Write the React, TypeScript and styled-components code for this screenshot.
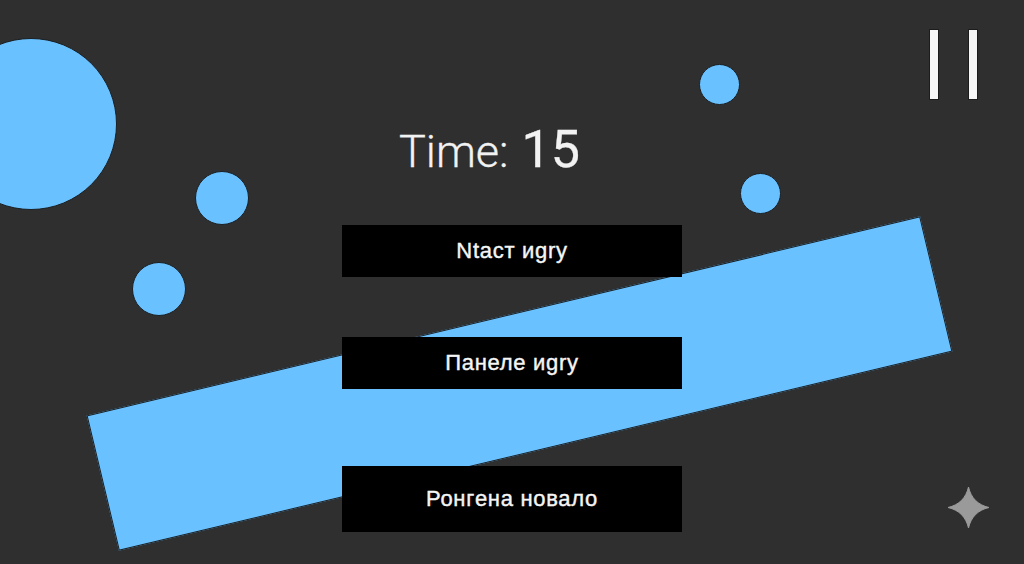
import styled, { createGlobalStyle } from 'styled-components';

const GlobalStyle = createGlobalStyle`
  html,
  body {
    margin: 0;
    padding: 0;
    background-color: #2f2f2f;
  }
`;

const Stage = styled.div`
  position: relative;
  box-sizing: border-box;
  width: 1024px;
  height: 564px;
  padding-top: 30px;
  background-color: #2f2f2f;
  font-family: Roboto, 'Liberation Sans', sans-serif;
  overflow: hidden;
`;

const Ball = styled.div<{ $x: number; $y: number; $size: number }>`
  position: absolute;
  left: ${(props) => props.$x}px;
  top: ${(props) => props.$y}px;
  width: ${(props) => props.$size}px;
  height: ${(props) => props.$size}px;
  box-sizing: border-box;
  background-color: #69c1ff;
  border: 1.5px solid #1a1f23;
  border-radius: 50%;
`;

const Platform = styled.div`
  position: absolute;
  left: 91px;
  top: 314px;
  width: 857px;
  height: 139px;
  box-sizing: border-box;
  background-color: #69c1ff;
  border: 1px solid #1a1f23;
  transform: rotate(-13.44deg);
`;

const TopBar = styled.div`
  position: relative;
  display: flex;
  justify-content: flex-end;
  gap: 31px;
  height: 70px;
  padding-right: 47px;
`;

const PauseBar = styled.div`
  width: 8px;
  height: 69px;
  background-color: #f7f7f7;
  box-shadow: 0 0 0 1px #1c1c1c;
`;

const Timer = styled.div`
  position: relative;
  display: flex;
  justify-content: center;
  align-items: baseline;
  gap: 13px;
  height: 125px;
  padding: 20px 45px 0 0;
  box-sizing: border-box;
  color: #f2f2f2;
  font-size: 45px;
  line-height: 60px;
  font-weight: 300;
  -webkit-text-stroke: 0.3px #f2f2f2;
`;

const TimerValue = styled.span`
  font-size: 52px;
  font-weight: 400;
`;

const Menu = styled.div`
  position: relative;
  display: flex;
  flex-direction: column;
  align-items: center;
`;

const MenuButton = styled.div<{ $height: number; $gap: number }>`
  display: flex;
  justify-content: center;
  align-items: center;
  width: 340px;
  height: ${(props) => props.$height}px;
  margin-top: ${(props) => props.$gap}px;
  background-color: #000000;
  color: #f5f5f5;
  font-family: 'Liberation Sans', Arial, sans-serif;
  font-size: 22px;
  letter-spacing: 0.7px;
  -webkit-text-stroke: 0.4px #f5f5f5;
`;

const StarIcon = styled.svg`
  position: absolute;
  right: 35px;
  bottom: 36px;
  width: 41px;
  height: 41px;
`;

export default function App(): JSX.Element {
  return (
    <>
      <GlobalStyle />
      <Stage>
        <Ball $x={-55} $y={38} $size={172} />
        <Ball $x={195} $y={171} $size={54} />
        <Ball $x={132} $y={262} $size={54} />
        <Ball $x={699} $y={64} $size={41} />
        <Ball $x={740} $y={173} $size={41} />
        <Platform />
        <TopBar>
          <PauseBar />
          <PauseBar />
        </TopBar>
        <Timer>
          Time:<TimerValue>15</TimerValue>
        </Timer>
        <Menu>
          <MenuButton $height={52} $gap={0}>Ntacт иgry</MenuButton>
          <MenuButton $height={52} $gap={60}>Панеле иgry</MenuButton>
          <MenuButton $height={66} $gap={77}>Ронгeна новало</MenuButton>
        </Menu>
        <StarIcon viewBox="0 0 41 41">
          <path d="M20.5 0 C23 11 30 18 41 20.5 C30 23 23 30 20.5 41 C18 30 11 23 0 20.5 C11 18 18 11 20.5 0 Z" fill="#9a9a9a" stroke="#9a9a9a" strokeWidth="1" strokeLinejoin="miter" />
        </StarIcon>
      </Stage>
    </>
  );
}
